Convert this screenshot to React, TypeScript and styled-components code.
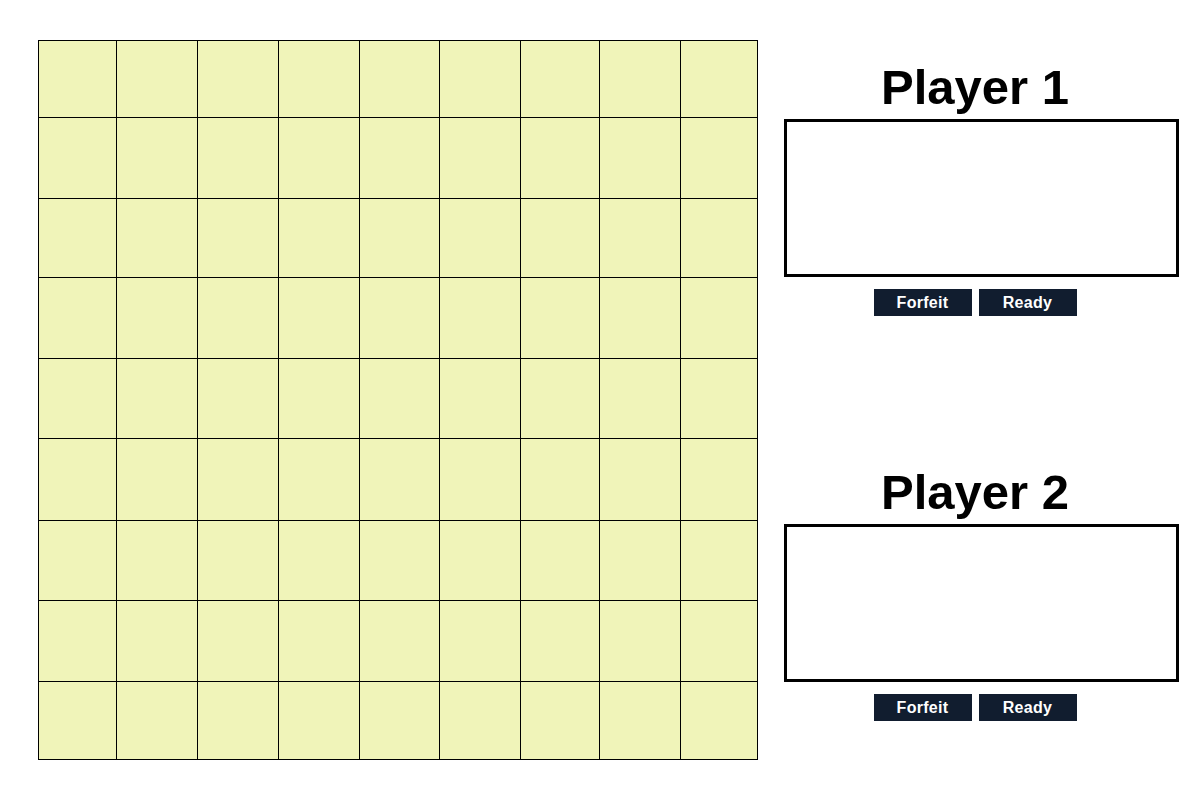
import React from "react";
import styled, { createGlobalStyle } from "styled-components";

const GlobalStyle = createGlobalStyle`
  html, body {
    margin: 0;
    padding: 0;
    background: #ffffff;
    font-family: "Liberation Sans", Arial, sans-serif;
  }
`;

// measured track sizes of the board in the reference
const COLS = [77, 80, 80, 80, 79, 80, 78, 80, 76];
const ROWS = [76, 80, 78, 80, 79, 81, 79, 80, 77];

const Page = styled.div`
  display: flex;
  align-items: flex-start;
  padding: 40px 0 0 38px;
  width: 1200px;
  height: 800px;
  box-sizing: border-box;
  overflow: hidden;
`;

const Board = styled.div`
  display: grid;
  grid-template-columns: ${COLS.map((c) => `${c}px`).join(" ")};
  grid-template-rows: ${ROWS.map((r) => `${r}px`).join(" ")};
  gap: 1px;
  padding: 1px;
  background: #000000;
`;

const Cell = styled.div`
  background: #f0f4b9;
`;

const Sidebar = styled.div`
  display: flex;
  flex-direction: column;
  gap: 148px;
  width: 398px;
  margin-left: 18px;
  padding-top: 19px;
`;

const PlayerPanel = styled.section`
  display: flex;
  flex-direction: column;
  align-items: center;
`;

const PlayerName = styled.h1`
  margin: 0;
  font-family: "Liberation Sans", Arial, sans-serif;
  font-size: 49px;
  font-weight: 700;
  line-height: 56px;
  color: #000000;
`;

const HandBox = styled.div`
  align-self: flex-start;
  margin-top: 4px;
  margin-left: 8px;
  width: 395px;
  height: 158px;
  box-sizing: border-box;
  border: 3px solid #000000;
  background: #ffffff;
`;

const Actions = styled.div`
  display: flex;
  gap: 7px;
  margin-top: 12px;
`;

const ActionButton = styled.button`
  width: 98px;
  height: 27px;
  border: none;
  padding: 0;
  background: #111d2f;
  color: #ffffff;
  font-family: "Liberation Sans", Arial, sans-serif;
  font-size: 16px;
  font-weight: 700;
  letter-spacing: 0.3px;
  cursor: pointer;
`;

function Player({ name }: { name: string }) {
  return (
    <PlayerPanel>
      <PlayerName>{name}</PlayerName>
      <HandBox />
      <Actions>
        <ActionButton>Forfeit</ActionButton>
        <ActionButton>Ready</ActionButton>
      </Actions>
    </PlayerPanel>
  );
}

export default function App() {
  const cells = Array.from({ length: 81 }, (_, i) => i);

  return (
    <>
      <GlobalStyle />
      <Page>
        <Board>
          {cells.map((i) => (
            <Cell key={i} />
          ))}
        </Board>
        <Sidebar>
          <Player name="Player 1" />
          <Player name="Player 2" />
        </Sidebar>
      </Page>
    </>
  );
}
